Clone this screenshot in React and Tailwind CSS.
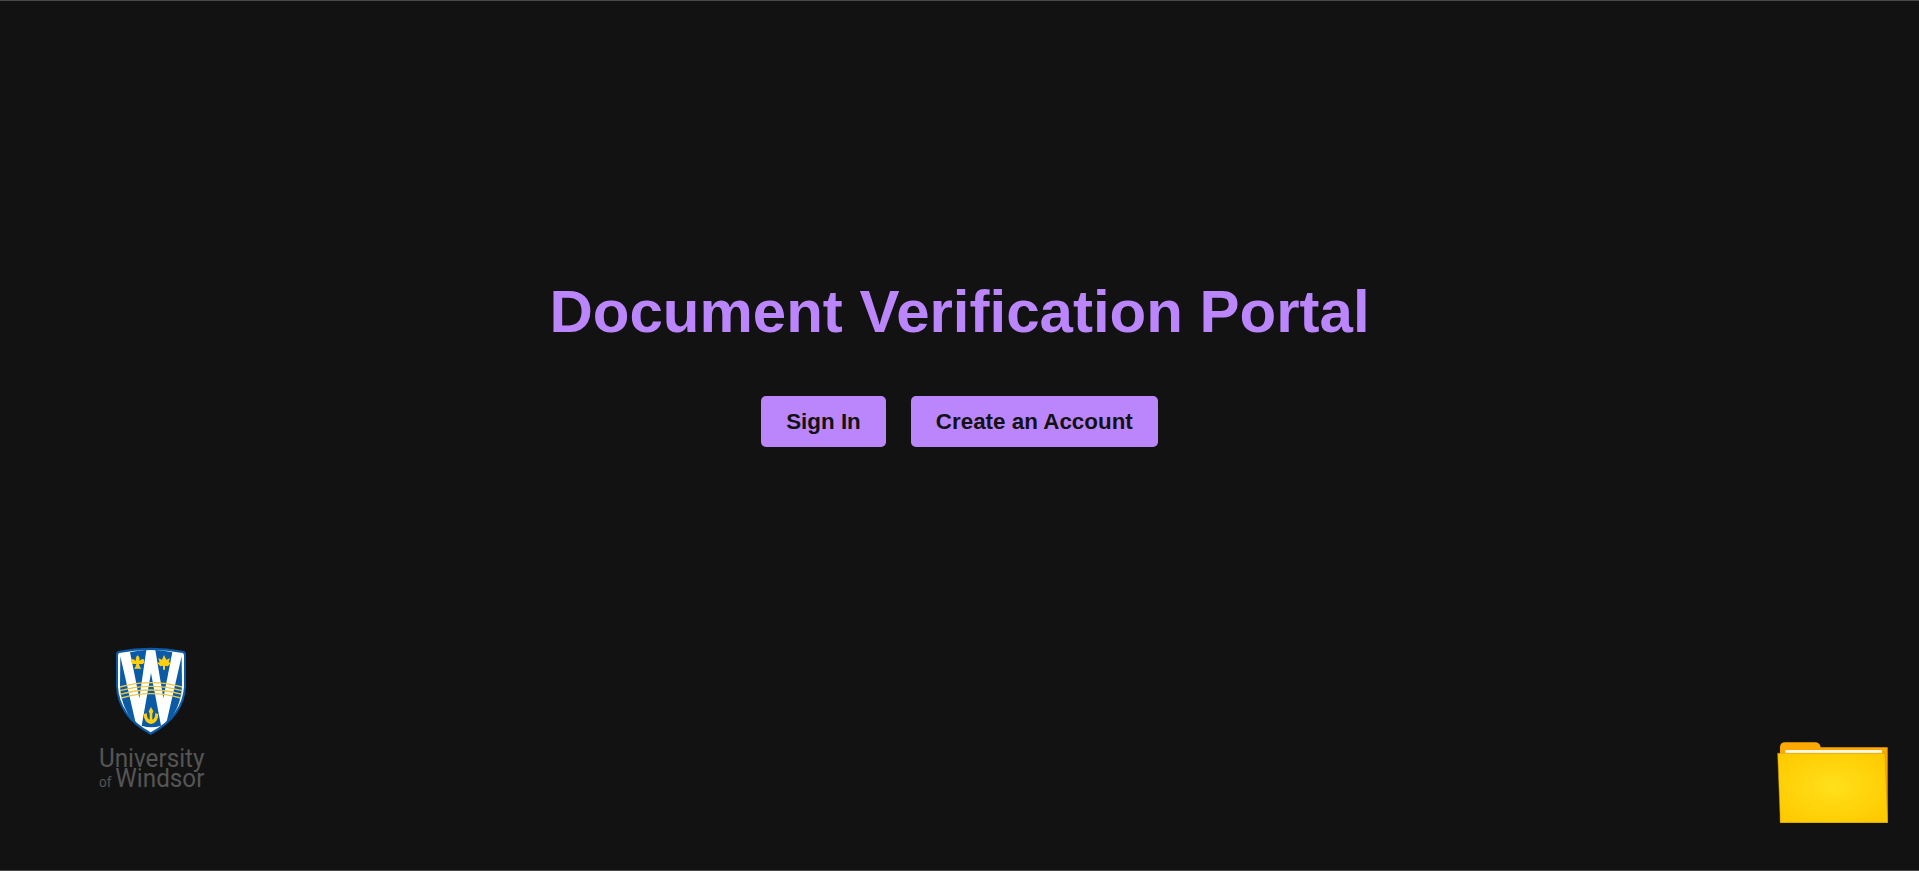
function Shield({ className }) {
  return (
    <svg className={className} viewBox="108 52 210 264">
      <path d="M114 64Q210 44 312 64Q318 66 318 74L318 170Q314 262 212 316Q112 262 108 170L108 74Q108 66 114 64Z" fill="#0b5aa5" />
      <path d="M118 70Q210 52 308 70Q312 72 312 78L312 170Q308 256 212 308Q118 256 114 170L114 78Q114 72 118 70Z" fill="#ffffff" />
      <path d="M121 80L167 280Q124 240 120 170Z" fill="#0b5aa5" />
      <path d="M305 80L259 280Q302 240 306 170Z" fill="#0b5aa5" />
      <path d="M150 68Q175 62 199 61L178 206Z" fill="#0b5aa5" />
      <path d="M226 61Q250 62 277 68L250 206Z" fill="#0b5aa5" />
      <path d="M213 130L243 288Q213 298 185 288Z" fill="#0b5aa5" />
      <g fill="none" stroke="#e9c84a" strokeWidth="4">
        <path d="M120 172Q213 146 306 172" />
        <path d="M120 183Q213 157 306 183" />
        <path d="M120 194Q213 168 306 194" />
        <path d="M124 205Q213 179 302 205" />
      </g>
      <path d="M173 77Q181 84 178 93L182 91Q192 84 193 94Q193 105 181 103L177 103L180 112L184 117L162 117L166 112L169 103L165 103Q153 105 153 94Q154 84 164 91L168 93Q165 84 173 77Z" fill="#ffd010" />
      <path d="M252 76L259 90L270 86L266 98L274 99L263 110L255 108L255 120L249 120L249 108L241 110L231 99L239 98L235 86L246 90Z" fill="#ffd010" />
      <path d="M213 232L220 245L217 252L217 270Q225 268 226 250L235 254Q234 280 213 283Q192 280 191 254L200 250Q201 268 209 270L209 252L206 245Z" fill="#ffd010" />
    </svg>
  );
}

function Folder({ className }) {
  return (
    <svg className={className} viewBox="52 36 331 243">
      <defs>
        <radialGradient id="folderFront" cx="50%" cy="48%" r="60%">
          <stop offset="0%" stopColor="#ffe01c" />
          <stop offset="100%" stopColor="#ffcb00" />
        </radialGradient>
      </defs>
      <path d="M60 72L60 52Q60 37 76 37L164 37Q180 37 182 52L383 52L383 278L60 278Z" fill="#ffa800" />
      <rect x="76" y="60" width="290" height="10" fill="#fff8e0" />
      <path d="M53 70L375 70L383 278L61 278Z" fill="url(#folderFront)" stroke="#c99700" strokeWidth="1.5" />
    </svg>
  );
}

export default function App() {
  return (
    <div className="h-screen flex flex-col bg-[#121212] border-y border-[#4a4a4a] overflow-hidden font-['Liberation_Sans',Arial,sans-serif]">
      <main className="flex-1 flex flex-col items-center pt-[276px]">
        <h1 className="text-[60px] leading-[69px] font-bold text-[#bb86fc]">Document Verification Portal</h1>
        <div className="flex gap-[25px] mt-[50px]">
          <button className="h-[51px] px-[25px] rounded-[5px] bg-[#bb86fc] text-[#121212] text-[22.4px] font-bold">Sign In</button>
          <button className="h-[51px] px-[25px] rounded-[5px] bg-[#bb86fc] text-[#121212] text-[22.4px] font-bold">Create an Account</button>
        </div>
      </main>
      <footer className="h-[223px] flex justify-between items-start pl-[99px] pr-[31px]">
        <div className="flex flex-col">
          <Shield className="ml-[17px] w-[70px] h-[88px]" />
          <div className="mt-[14px] text-[#555555] font-['Roboto',sans-serif] text-[25px] leading-[20px] origin-left scale-x-[0.97] whitespace-nowrap">University</div>
          <div className="flex items-baseline text-[#555555] font-['Roboto',sans-serif] leading-[20px] origin-left scale-x-[0.97] whitespace-nowrap">
            <span className="text-[14px] mr-[4px]">of</span>
            <span className="text-[25px]">Windsor</span>
          </div>
        </div>
        <Folder className="mt-[95px] w-[111px] h-[81px]" />
      </footer>
    </div>
  );
}
